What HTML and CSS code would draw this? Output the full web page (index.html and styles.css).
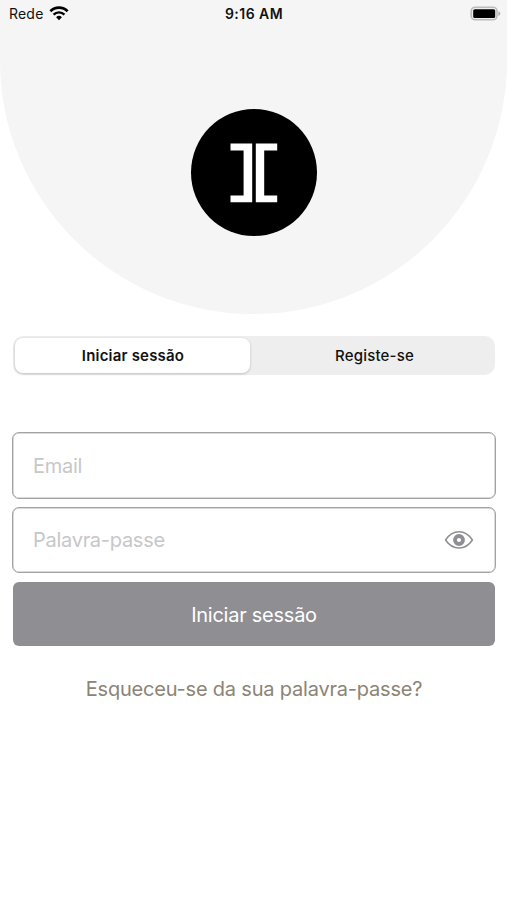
FILE: index.html
```html
<!DOCTYPE html>
<html lang="pt">
<head>
    <meta charset="UTF-8">
    <meta name="viewport" content="width=device-width, initial-scale=1.0">
    <title>Iniciar sessão</title>
    <link rel="stylesheet" href="styles.css">
</head>
<body>
    <header class="hero">
        <div class="status-bar">
            <div class="network">
                <span class="carrier">Rede</span>
                <svg class="wifi" width="20" height="15" viewBox="0 0 20 15">
                    <path d="M1.4 5.2a12 12 0 0 1 17.2 0" fill="none" stroke="#000" stroke-width="2.7"/>
                    <path d="M4.6 8.6a7.6 7.6 0 0 1 10.8 0" fill="none" stroke="#000" stroke-width="2.4"/>
                    <path d="M7.1 11.2a4.2 4.2 0 0 1 5.8 0L10 14.2z" fill="#000"/>
                </svg>
            </div>
            <span class="time">9:16 AM</span>
            <svg class="battery" width="31" height="16" viewBox="0 0 31 16">
                <rect x="1.2" y="1.2" width="25.8" height="12.6" rx="4" fill="#eee" stroke="#bcbcbc" stroke-width="1.6"/>
                <rect x="3.2" y="3.2" width="22" height="8.8" rx="1.6" fill="#000"/>
                <path d="M28.4 5.2c2.6 1 2.6 3.8 0 4.8z" fill="#b0b0b0"/>
            </svg>
        </div>
        <div class="logo">
            <svg width="48" height="60" viewBox="0 0 48 60">
                <path d="M.5.6h21.7v58.6H.5v-6.6h13.1V7.4H.5z" fill="#fff"/>
                <path d="M47.2.6H25.8v58.6h21.4v-6.6H34.2V7.4h13z" fill="#fff"/>
            </svg>
        </div>
    </header>

    <main class="content">
        <div class="tabs">
            <button type="button" class="tab active">Iniciar sessão</button>
            <button type="button" class="tab">Registe-se</button>
        </div>

        <form class="login-form">
            <div class="field">
                <input type="email" id="email" placeholder="Email">
            </div>
            <div class="field password">
                <input type="password" id="password" placeholder="Palavra-passe">
                <svg class="eye" width="30" height="20" viewBox="0 0 30 20">
                    <path d="M1.6 10C8.6-1 21.4-1 28.4 10 21.4 20.6 8.6 20.6 1.6 10z" fill="none" stroke="#8e8e93" stroke-width="1.5"/>
                    <circle cx="15" cy="10" r="4" fill="none" stroke="#8e8e93" stroke-width="3.8"/>
                </svg>
            </div>
            <button type="submit" class="submit">Iniciar sessão</button>
        </form>

        <a class="forgot" href="#">Esqueceu-se da sua palavra-passe?</a>
    </main>
</body>
</html>
```

FILE: styles.css
```css
* {
    box-sizing: border-box;
}
body {
    margin: 0;
    background-color: #fff;
    color: #111;
    font-family: Inter, "Liberation Sans", sans-serif;
}
.hero {
    height: 314px;
    background-color: #f5f5f5;
    border-radius: 0 0 254px 254px;
}
.status-bar {
    display: grid;
    grid-template-columns: 1fr auto 1fr;
    align-items: center;
    height: 27px;
    padding: 0 6px;
    font-size: 14px;
    line-height: 27px;
}
.network {
    display: flex;
    align-items: center;
    gap: 5px;
    padding-left: 3px;
}
.carrier {
    letter-spacing: 0.2px;
}
.time {
    padding-left: 1px;
    font-weight: 600;
    letter-spacing: 0.45px;
}
.battery {
    justify-self: end;
}
.logo {
    display: flex;
    align-items: center;
    justify-content: center;
    width: 126px;
    height: 127px;
    margin: 82px auto 0;
    border-radius: 50%;
    background-color: #000;
}
.content {
    padding: 22px 12px 0;
}
.tabs {
    display: flex;
    height: 39px;
    margin: 0 0 0 1px;
    padding: 2px;
    border-radius: 10px;
    background-color: #eee;
}
button {
    border: none;
    padding: 0;
    font-family: inherit;
}
.tab {
    flex: 1;
    padding-left: 6px;
    border-radius: 8px;
    background: none;
    color: #111;
    font-size: 15px;
    font-weight: 500;
    letter-spacing: 0.2px;
}
.tab.active {
    flex: 0 0 235px;
    padding-left: 1px;
    background-color: #fff;
    font-weight: 600;
    box-shadow: 0 1px 3px rgba(0, 0, 0, 0.2);
}
.login-form {
    display: flex;
    flex-direction: column;
    gap: 8px;
    margin-top: 57px;
}
.field {
    display: flex;
    align-items: center;
    height: 67px;
    margin-right: -1px;
    padding: 0 21px 0 20px;
    border: 1px solid #a3a3a5;
    border-radius: 7px;
    box-shadow: inset 0 0 0 0.5px #b5b5b7;
}
.field.password {
    height: 66px;
}
.field input {
    flex: 1;
    min-width: 0;
    padding: 0;
    border: none;
    outline: none;
    background: none;
    font-family: inherit;
    font-size: 20px;
    letter-spacing: -0.28px;
}
.field input::placeholder {
    color: #c7c7c9;
}
.submit {
    height: 64px;
    margin: 1px 0 0 1px;
    padding-top: 2px;
    border-radius: 6px;
    background-color: #8e8e93;
    color: #fff;
    font-size: 20px;
    letter-spacing: -0.25px;
}
.forgot {
    display: block;
    margin-top: 31px;
    padding-left: 1px;
    color: #8c8475;
    font-size: 20px;
    letter-spacing: -0.2px;
    line-height: 24px;
    text-align: center;
    text-decoration: none;
}
```
